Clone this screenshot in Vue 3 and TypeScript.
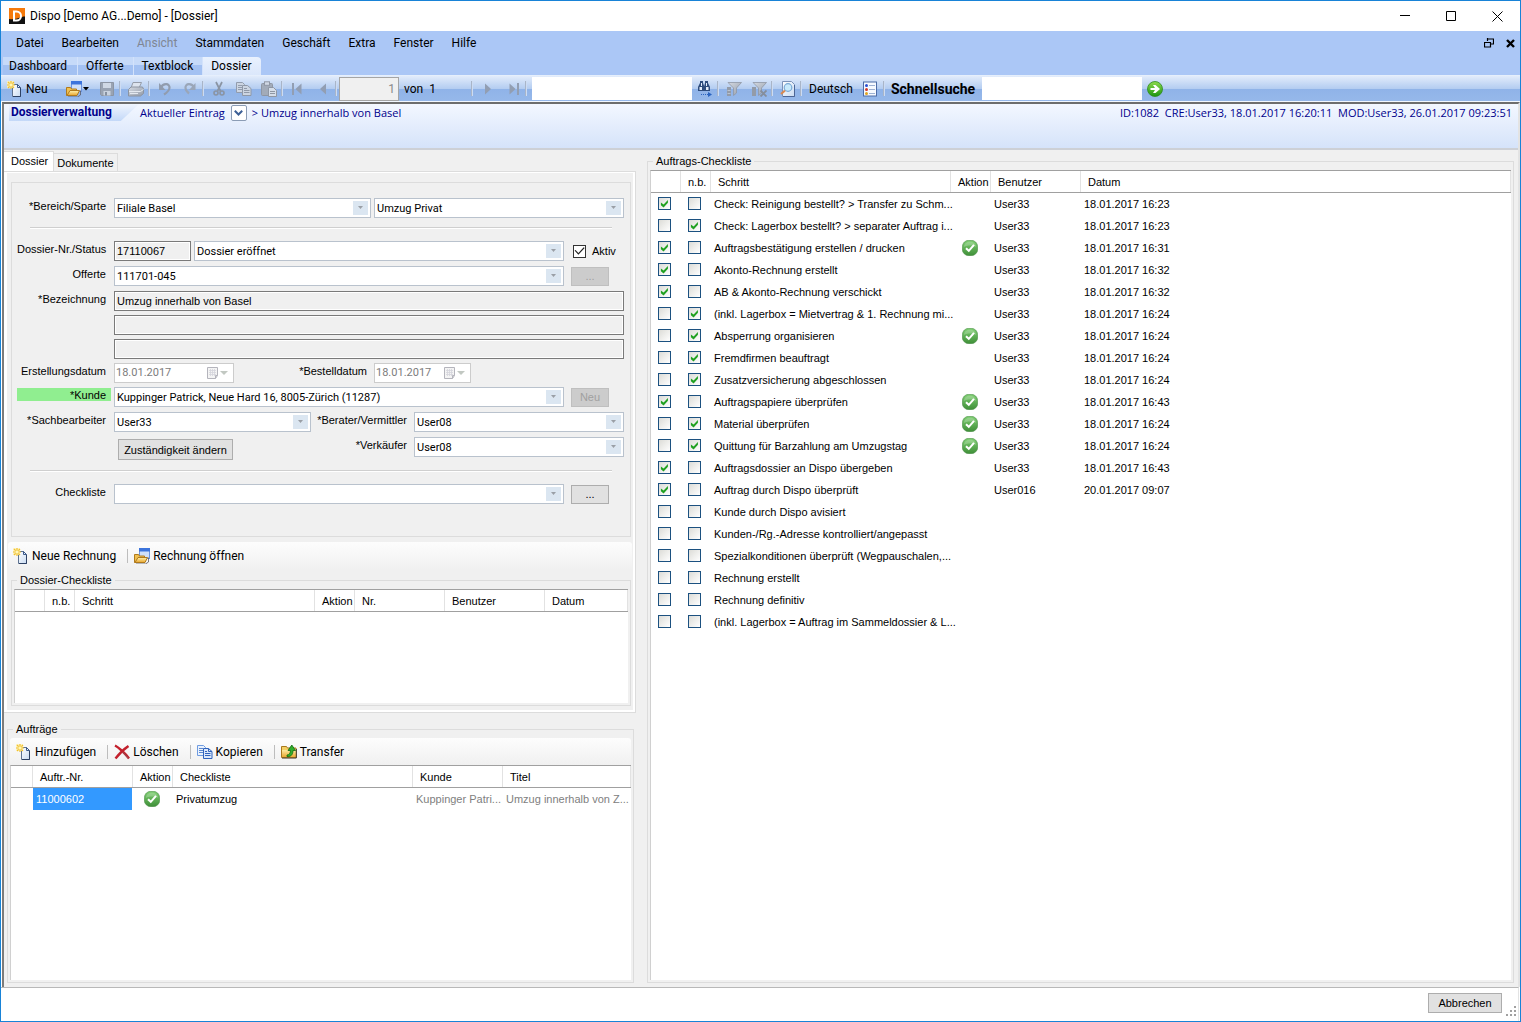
<script setup lang="ts">
import { ref } from 'vue'

interface Step {
  done: boolean
  skipped: boolean
  text: string
  action?: boolean
  user?: string
  date?: string
}

const menus = ['Datei', 'Bearbeiten', 'Ansicht', 'Stammdaten', 'Geschäft', 'Extra', 'Fenster', 'Hilfe']
const windows = ['Dashboard', 'Offerte', 'Textblock', 'Dossier']

const step = (mark: string, text: string, user = '', date = '', action = false): Step => ({
  done: mark === 'x',
  skipped: mark === 'n',
  text,
  user,
  date,
  action,
})

const steps = ref<Step[]>([
  step('x', 'Check: Reinigung bestellt? > Transfer zu Schm...', 'User33', '18.01.2017 16:23'),
  step('n', 'Check: Lagerbox bestellt? > separater Auftrag i...', 'User33', '18.01.2017 16:23'),
  step('x', 'Auftragsbestätigung erstellen / drucken', 'User33', '18.01.2017 16:31', true),
  step('x', 'Akonto-Rechnung erstellt', 'User33', '18.01.2017 16:32'),
  step('x', 'AB & Akonto-Rechnung verschickt', 'User33', '18.01.2017 16:32'),
  step('n', '(inkl. Lagerbox = Mietvertrag & 1. Rechnung mi...', 'User33', '18.01.2017 16:24'),
  step('n', 'Absperrung organisieren', 'User33', '18.01.2017 16:24', true),
  step('n', 'Fremdfirmen beauftragt', 'User33', '18.01.2017 16:24'),
  step('n', 'Zusatzversicherung abgeschlossen', 'User33', '18.01.2017 16:24'),
  step('x', 'Auftragspapiere überprüfen', 'User33', '18.01.2017 16:43', true),
  step('n', 'Material überprüfen', 'User33', '18.01.2017 16:24', true),
  step('n', 'Quittung für Barzahlung am Umzugstag', 'User33', '18.01.2017 16:24', true),
  step('x', 'Auftragsdossier an Dispo übergeben', 'User33', '18.01.2017 16:43'),
  step('x', 'Auftrag durch Dispo überprüft', 'User016', '20.01.2017 09:07'),
  step('', 'Kunde durch Dispo avisiert'),
  step('', 'Kunden-/Rg.-Adresse kontrolliert/angepasst'),
  step('', 'Spezialkonditionen überprüft (Wegpauschalen,...'),
  step('', 'Rechnung erstellt'),
  step('', 'Rechnung definitiv'),
  step('', '(inkl. Lagerbox = Auftrag im Sammeldossier & L...'),
])
const active = ref(true)
</script>

<template>
  <div class="window">
    <svg class="sprite" width="0" height="0" aria-hidden="true">
      <defs>
        <linearGradient id="gSheet" x1="0" y1="0" x2="1" y2="1"><stop offset="0" stop-color="#fff" /><stop offset="1" stop-color="#c9dbf2" /></linearGradient>
        <linearGradient id="gFolder" x1="0" y1="0" x2="0" y2="1"><stop offset="0" stop-color="#fff3b0" /><stop offset="1" stop-color="#e9a52c" /></linearGradient>
        <linearGradient id="gOk" x1="0" y1="0" x2="0" y2="1"><stop offset="0" stop-color="#7fcf72" /><stop offset="1" stop-color="#3f8f38" /></linearGradient>
        <linearGradient id="gGo" x1="0" y1="0" x2="0" y2="1"><stop offset="0" stop-color="#8fdc4e" /><stop offset="1" stop-color="#1c9410" /></linearGradient>
        <linearGradient id="gGray" x1="0" y1="0" x2="1" y2="1"><stop offset="0" stop-color="#d5dae2" /><stop offset="1" stop-color="#939ba8" /></linearGradient>
      </defs>
      <symbol id="i-new" viewBox="0 0 16 16">
        <path d="M5.500 3.500h5l3 3v9h-8z" fill="url(#gSheet)" stroke="#5f7391" />
        <path d="M10.500 3.500v3h3z" fill="#e9f1fb" stroke="#3c5a8a" />
        <path d="M13.500 7v8.500H6" fill="none" stroke="#2d4164" />
        <path d="M0 0h7v7H0z" fill="#fff3b8" opacity=".8" />
        <path d="M1 1l6 6M7 1L1 7M4 0v8M0 4h8" stroke="#f0c030" stroke-width="1.200" />
        <rect x="2.500" y="2.500" width="3" height="3" fill="#fff6b8" />
      </symbol>
      <symbol id="i-open" viewBox="0 0 16 16">
        <rect x="5.500" y=".5" width="10" height="10" fill="#cfe0fa" stroke="#6c94dc" />
        <path d="M5 0h11v3.500H5z" fill="#3c74dc" />
        <path d="M.5 6.500h4l1 1.500h5v6.500H.5z" fill="#f0c050" stroke="#b07a1c" />
        <path d="M1 14.500l3-5h9.500l-2.500 5z" fill="url(#gFolder)" stroke="#b07a1c" />
        <path d="M14.500 9.500v4.500l-3 2H2" fill="none" stroke="#5a5a66" stroke-width=".8" />
      </symbol>
      <symbol id="i-copy" viewBox="0 0 16 16">
        <path d="M.5 1.500h6l2 2v8h-8z" fill="#eaf2fd" stroke="#6f9be0" />
        <path d="M2 4.500h4M2 6.500h4M2 8.500h4" stroke="#5b88d0" />
        <path d="M6.500 4.500h5l3.500 3v7H6.500z" fill="#dbe8fb" stroke="#2f62bd" />
        <path d="M11.500 4.500v3H15M8 9.500h5.500M8 11.500h5.500M8 7.500h2" fill="none" stroke="#2f62bd" />
      </symbol>
      <symbol id="i-ok" viewBox="0 0 16 16">
        <rect x=".3" y=".3" width="15.400" height="15.400" rx="6.500" fill="url(#gOk)" stroke="#4d8f49" stroke-width=".6" />
        <path d="M2 7c0-7 12-7 12 0-3-2-9-2-12 0z" fill="#fff" opacity=".22" />
        <path d="M4 8.200l2.800 2.600L12 4.800" fill="none" stroke="#fff" stroke-width="2" />
      </symbol>
      <symbol id="i-cal" viewBox="0 0 12 12">
        <path d="M.5.5h10v8l-2 3h-8z" fill="#f4f4f4" stroke="#b4b4bc" />
        <path d="M2 3.500h7M2 5.500h7M2 7.500h7M3.500 2v7M5.500 2v7M7.500 2v7" stroke="#d4d4dc" stroke-width=".8" />
        <path d="M8.500 11.500v-3h2" fill="none" stroke="#b4b4bc" />
      </symbol>
    </svg>

    <header class="titlebar">
      <svg class="logo" width="16" height="16" viewBox="0 0 16 16" aria-hidden="true">
        <rect width="16" height="16" fill="#111" />
        <path d="M0 0h16v8.500C11 8.500 9 12 0 11z" fill="#f57a0c" />
        <path d="M5 3.500h2.500a4.200 4.200 0 0 1 0 9H5z" fill="none" stroke="#fff" stroke-width="2" />
      </svg>
      <span class="caption">Dispo [Demo AG...Demo] - [Dossier]</span>
      <div class="winbtns">
        <button type="button" aria-label="Minimieren"><svg width="11" height="11"><path d="M0 4.500h10" stroke="#000" /></svg></button>
        <button type="button" aria-label="Maximieren"><svg width="11" height="11"><path d="M.5.5h9v9h-9z" stroke="#000" fill="none" /></svg></button>
        <button type="button" aria-label="Schliessen"><svg width="11" height="11"><path d="M.5.5l10 10M10.500.5l-10 10" stroke="#000" /></svg></button>
      </div>
    </header>

    <nav class="menubar">
      <button v-for="m in menus" :key="m" type="button" :disabled="m === 'Ansicht'">{{ m }}</button>
      <div class="mdibtns">
        <button type="button" aria-label="Wiederherstellen"><svg width="10" height="10"><path d="M3 1h6.500v5H7M3.500 0v3M.5 4v5h6V4M0 4.500h7" fill="none" stroke="#000" stroke-width="1.200" /></svg></button>
        <button type="button" aria-label="Dossier schliessen"><svg width="9" height="9"><path d="M1 1l7 7M8 1l-7 7" stroke="#000" stroke-width="2.400" /></svg></button>
      </div>
    </nav>

    <div class="wintabs">
      <button v-for="w in windows" :key="w" type="button" :class="{ on: w === 'Dossier' }">{{ w }}</button>
    </div>

    <div class="toolbar">
      <button type="button" class="new"><svg width="16" height="16"><use href="#i-new" /></svg>Neu</button>
      <button type="button" class="open" aria-label="Öffnen">
        <svg width="16" height="16"><use href="#i-open" /></svg>
        <svg width="7" height="4"><path d="M0 0h6L3 3.500z" fill="#000" /></svg>
      </button>
      <button type="button" class="tb" aria-label="Speichern"><svg width="16" height="16"><path d="M1.500 1.500h13v13h-12l-1-1z" fill="#99a3b3" stroke="#8c95a4" /><path d="M4 2h8v5H4z" fill="#cfd8e5" /><path d="M4.500 10h7v4.500h-7z" fill="#c9d2df" /><path d="M6 11h2v3.500H6z" fill="#858f9f" /></svg></button>
      <i class="sep"></i>
      <button type="button" class="tb" aria-label="Drucken"><svg width="16" height="16"><path d="M5 1.500h8.500L11 7H3z" fill="#dde4ee" stroke="#959ca8" /><path d="M.5 8.500L3 6h11.500l1 2v4.500l-3 2.500H.5z" fill="url(#gGray)" stroke="#8c94a1" /><path d="M1 10.500h11.500l3-2M2 12.500h8" fill="none" stroke="#e4e9f0" /></svg></button>
      <i class="sep"></i>
      <button type="button" class="tb" aria-label="Rückgängig"><svg width="16" height="16"><path d="M4 6.500C6 2 13 2 12.500 7c-.3 3-2.500 4.500-5.500 6.500" fill="none" stroke="#919cae" stroke-width="2.200" /><path d="M2 2v7h6.500z" fill="#919cae" /></svg></button>
      <button type="button" class="tb" aria-label="Wiederholen"><svg width="16" height="16"><path d="M12 6.500C10 2 3 2 3.500 7c.2 2.500 1.500 4 3.500 5.500" fill="none" stroke="#9aa6b8" stroke-width="2.200" /><path d="M13.500 2v7H7z" fill="#9aa6b8" /></svg></button>
      <i class="sep"></i>
      <button type="button" class="tb" aria-label="Ausschneiden"><svg width="16" height="16"><path d="M5 1l4.500 9M11 1L6.500 10" stroke="#8a94a3" stroke-width="1.700" /><circle cx="5" cy="12" r="2" fill="none" stroke="#8a94a3" stroke-width="1.600" /><circle cx="11" cy="12" r="2" fill="none" stroke="#8a94a3" stroke-width="1.600" /></svg></button>
      <button type="button" class="tb" aria-label="Kopieren"><svg width="16" height="16"><path d="M.5 1.500h6l2 2v8h-8z" fill="#ccd5e2" stroke="#929cad" /><path d="M2 4.500h4M2 6.500h4M2 8.500h4" stroke="#929cad" /><path d="M6.500 4.500h5l3.500 3v7H6.500z" fill="#ccd5e2" stroke="#8f98a7" /><path d="M8 9.500h5.500M8 11.500h5.500M8 7.500h3" stroke="#8f98a7" /></svg></button>
      <button type="button" class="tb" aria-label="Einfügen"><svg width="16" height="16"><rect x=".5" y="2.500" width="11" height="12" rx="1" fill="#a2abb9" stroke="#8f97a4" /><rect x="3.500" y=".8" width="5" height="3.500" fill="#d0d8e4" stroke="#8f97a4" /><path d="M7.500 6.500h5l3 3v6h-8z" fill="#d5deea" stroke="#8f97a4" /><path d="M9 10.500h5M9 12.500h5" stroke="#8f97a4" /></svg></button>
      <i class="sep"></i>
      <button type="button" class="tb" aria-label="Erster"><svg width="16" height="16"><path d="M2 2h2v12H2zM11.500 2.500v11l-6-5.500z" fill="#929eb2" /></svg></button>
      <button type="button" class="tb" aria-label="Vorheriger"><svg width="16" height="16"><path d="M11 2.500v11L5 8z" fill="#929eb2" /></svg></button>
      <i class="sep"></i>
      <input class="pos" type="text" value="1" disabled aria-label="Position" />
      <span class="count">von&nbsp; 1</span>
      <i class="sep"></i>
      <button type="button" class="tb" aria-label="Nächster"><svg width="16" height="16"><path d="M5 2.500v11L11 8z" fill="#929eb2" /></svg></button>
      <button type="button" class="tb" aria-label="Letzter"><svg width="16" height="16"><path d="M12 2h2v12h-2zM4.500 2.500v11l6-5.500z" fill="#929eb2" /></svg></button>
      <i class="sep"></i>
      <input class="find" type="text" aria-label="Suchen" />
      <button type="button" class="tb" aria-label="Weitersuchen"><svg width="16" height="16"><path d="M3 0h3v2l1.500 4v4H1V6l2-4zM8 0h3v2l2 4v4H7V6l1-4z" fill="#2f4d7d" /><path d="M2.500 6h2.500v3H2.500zM9 6h2.500v3H9zM4 2h1v3H4zM9 2h1v3H9z" fill="#e4edfa" /><path d="M4 13.500h7" stroke="#2b64c0" stroke-dasharray="1 1" /><path d="M11 11v5l4-2.500z" fill="#2b64c0" /></svg></button>
      <i class="sep"></i>
      <button type="button" class="tb" aria-label="Filter"><svg width="16" height="16"><path d="M2 1.500h13.500l-5 5.500v5l-3 2.500V7z" fill="url(#gGray)" stroke="#8f97a4" stroke-width=".8" /><path d="M1 6h4v9H1z" fill="#939ba8" /><path d="M1.500 9.500h3M1.500 12.500h3" stroke="#b9c3d1" /></svg></button>
      <button type="button" class="tb" aria-label="Filter entfernen"><svg width="16" height="16"><path d="M2 1.500h13.500l-5 5.500v5l-3 2.500V7z" fill="url(#gGray)" stroke="#8f97a4" stroke-width=".8" /><path d="M1 6h4v9H1z" fill="#939ba8" /><path d="M9.500 9.500l6 6M15.500 9.500l-6 6" stroke="#858e9c" stroke-width="1.800" /></svg></button>
      <i class="sep"></i>
      <button type="button" class="tb" aria-label="Vorschau"><svg width="16" height="16"><path d="M2.500.5h9l3 3v12h-12z" fill="url(#gSheet)" stroke="#7d93b8" /><path d="M14.500 4v11.500H3" fill="none" stroke="#4c6596" /><circle cx="8" cy="6.500" r="3.800" fill="#c8eafb" stroke="#7aa9d6" stroke-width="1.200" /><path d="M5 9.500l-4 3.500" stroke="#d98a52" stroke-width="2.200" /></svg></button>
      <i class="sep"></i>
      <button type="button" class="lang">Deutsch</button>
      <button type="button" class="tb" aria-label="Liste"><svg width="16" height="16"><rect x="1.500" y="1" width="13" height="14" fill="#f7faff" stroke="#4d6ca6" /><path d="M7 4.500h6M7 8.500h6M7 12.500h6" stroke="#9db1d3" /><circle cx="4.500" cy="4.500" r="1.500" fill="#2b4fd0" /><circle cx="4.500" cy="8.500" r="1.500" fill="#d3382a" /><circle cx="4.500" cy="12.500" r="1.500" fill="#e0a520" /></svg></button>
      <i class="sep"></i>
      <label class="quick" for="quick">Schnellsuche</label>
      <input id="quick" class="find" type="text" />
      <button type="button" class="tb" aria-label="Los"><svg width="16" height="16"><circle cx="8" cy="8" r="7.500" fill="url(#gGo)" stroke="#2f8c1e" stroke-width=".8" /><path d="M3.500 7H8L6 4h2.500L13 8l-4.500 4H6l2-3H3.500z" fill="#fff" /></svg></button>
    </div>

    <div class="client">
      <div class="infobar">
        <h1>Dossierverwaltung</h1>
        <span>Aktueller Eintrag</span>
        <button type="button" class="drop" aria-label="Einträge"><svg width="9" height="6"><path d="M.8.8L4.500 4.500 8.200.8" fill="none" stroke="#3c5f96" stroke-width="2" /></svg></button>
        <span>&gt; Umzug innerhalb von Basel</span>
        <span class="meta">ID:1082&nbsp; CRE:User33, 18.01.2017 16:20:11&nbsp; MOD:User33, 26.01.2017 09:23:51</span>
      </div>

      <main class="work">
        <section class="left">
          <div class="tabs">
            <button type="button" class="on">Dossier</button>
            <button type="button">Dokumente</button>
          </div>
          <div class="page">
            <form class="form" @submit.prevent>
              <div class="row">
                <label for="bereich">*Bereich/Sparte</label>
                <span class="combo grow"><select id="bereich"><option>Filiale Basel</option></select><svg width="15" height="14"><path d="M5 5h5L7.500 8z" /></svg></span>
                <span class="combo sparte"><select aria-label="Sparte"><option>Umzug Privat</option></select><svg width="15" height="14"><path d="M5 5h5L7.500 8z" /></svg></span>
              </div>
              <hr />
              <div class="row">
                <label for="nr">Dossier-Nr./Status</label>
                <input id="nr" class="ro nr" type="text" value="17110067" readonly />
                <span class="combo grow"><select aria-label="Status"><option>Dossier eröffnet</option></select><svg width="15" height="14"><path d="M5 5h5L7.500 8z" /></svg></span>
                <span class="side"><input id="aktiv" v-model="active" type="checkbox" class="chk plain" /><label for="aktiv" class="inline">Aktiv</label></span>
              </div>
              <div class="row">
                <label for="offerte">Offerte</label>
                <span class="combo grow"><select id="offerte"><option>111701-045</option></select><svg width="15" height="14"><path d="M5 5h5L7.500 8z" /></svg></span>
                <span class="side"><button type="button" class="btn small" disabled>...</button></span>
              </div>
              <div class="row tight">
                <label for="bez">*Bezeichnung</label>
                <input id="bez" class="ro grow" type="text" value="Umzug innerhalb von Basel" readonly />
              </div>
              <div class="row tight"><span class="nolabel"></span><input class="ro grow" type="text" readonly aria-label="Bezeichnung 2" /></div>
              <div class="row tight"><span class="nolabel"></span><input class="ro grow" type="text" readonly aria-label="Bezeichnung 3" /></div>
              <div class="row tight">
                <label for="erst">Erstellungsdatum</label>
                <span class="date first"><input id="erst" type="text" value="18.01.2017" disabled /><svg width="12" height="12"><use href="#i-cal" /></svg><svg width="8" height="5"><path d="M0 0h8L4 4z" fill="#c2c8c2" /></svg></span>
                <label for="best" class="second">*Bestelldatum</label>
                <span class="date"><input id="best" type="text" value="18.01.2017" disabled /><svg width="12" height="12"><use href="#i-cal" /></svg><svg width="8" height="5"><path d="M0 0h8L4 4z" fill="#c2c8c2" /></svg></span>
                <span class="rest"></span>
              </div>
              <div class="row">
                <label for="kunde" class="mark">*Kunde</label>
                <span class="combo grow"><select id="kunde"><option>Kuppinger Patrick, Neue Hard 16, 8005-Zürich (11287)</option></select><svg width="15" height="14"><path d="M5 5h5L7.500 8z" /></svg></span>
                <span class="side"><button type="button" class="btn small" disabled>Neu</button></span>
              </div>
              <div class="row">
                <label for="sach">*Sachbearbeiter</label>
                <span class="combo sach"><select id="sach"><option>User33</option></select><svg width="15" height="14"><path d="M5 5h5L7.500 8z" /></svg></span>
                <label for="berater" class="second">*Berater/Vermittler</label>
                <span class="combo person"><select id="berater"><option>User08</option></select><svg width="15" height="14"><path d="M5 5h5L7.500 8z" /></svg></span>
              </div>
              <div class="row">
                <span class="nolabel"></span>
                <button type="button" class="btn duty">Zuständigkeit ändern</button>
                <label for="verk" class="second">*Verkäufer</label>
                <span class="combo person"><select id="verk"><option>User08</option></select><svg width="15" height="14"><path d="M5 5h5L7.500 8z" /></svg></span>
              </div>
              <hr class="low" />
              <div class="row">
                <label for="check">Checkliste</label>
                <span class="combo grow"><select id="check"><option></option></select><svg width="15" height="14"><path d="M5 5h5L7.500 8z" /></svg></span>
                <span class="side"><button type="button" class="btn small">...</button></span>
              </div>
            </form>

            <div class="strip">
              <button type="button"><svg width="16" height="16"><use href="#i-new" /></svg>Neue Rechnung</button>
              <i></i>
              <button type="button"><svg width="16" height="16"><use href="#i-open" /></svg>Rechnung öffnen</button>
            </div>

            <fieldset class="group dcl">
              <legend>Dossier-Checkliste</legend>
              <div class="grid">
                <table>
                  <colgroup><col class="c30" /><col class="c30" /><col class="c240" /><col class="c40" /><col class="c90" /><col class="c100" /><col /></colgroup>
                  <thead><tr><th></th><th>n.b.</th><th>Schritt</th><th>Aktion</th><th>Nr.</th><th>Benutzer</th><th>Datum</th></tr></thead>
                </table>
              </div>
            </fieldset>
          </div>

          <fieldset class="group orders">
            <legend>Aufträge</legend>
            <div class="strip">
              <button type="button"><svg width="16" height="16"><use href="#i-new" /></svg>Hinzufügen</button>
              <i></i>
              <button type="button"><svg width="16" height="16"><path d="M1 1.500C4 3 11 9 15 14.500M14.500 2C10 5 5 10 1.500 14.500" fill="none" stroke="#c3202c" stroke-width="2.400" /><path d="M8.500 8c2 2 4 4 6 6.500" stroke="#9c5a60" /></svg>Löschen</button>
              <i></i>
              <button type="button"><svg width="16" height="16"><use href="#i-copy" /></svg>Kopieren</button>
              <i></i>
              <button type="button"><svg width="16" height="16"><path d="M.5 2.500h5l1 1.500h8.500v9.500H.5z" fill="#f3cf63" stroke="#a87820" /><path d="M1 6h10l4-1v8.500H1z" fill="url(#gFolder)" /><path d="M15.300 5v9H1" fill="none" stroke="#3a3322" /><path d="M6 12.500c3 .5 6-1 6-6h2.500L10.800 1 7 6.500h2.500c0 2.500-1.500 4.500-3.500 4.500z" fill="#2fae2c" stroke="#12680f" stroke-width=".8" /></svg>Transfer</button>
            </div>
            <div class="grid">
              <table>
                <colgroup><col class="c22" /><col class="c100" /><col class="c40" /><col class="c240" /><col class="c90" /><col /></colgroup>
                <thead><tr><th></th><th>Auftr.-Nr.</th><th>Aktion</th><th>Checkliste</th><th>Kunde</th><th>Titel</th></tr></thead>
                <tbody>
                  <tr>
                    <td></td>
                    <td class="sel"><span>11000602</span></td>
                    <td class="act"><svg width="16" height="16"><use href="#i-ok" /></svg></td>
                    <td>Privatumzug</td>
                    <td class="dim">Kuppinger Patri...</td>
                    <td class="dim">Umzug innerhalb von Z...</td>
                  </tr>
                </tbody>
              </table>
            </div>
          </fieldset>
        </section>

        <fieldset class="group right">
          <legend>Auftrags-Checkliste</legend>
          <div class="grid">
            <table>
              <colgroup><col class="c30" /><col class="c30" /><col class="c240" /><col class="c40" /><col class="c90" /><col /></colgroup>
              <thead><tr><th></th><th>n.b.</th><th>Schritt</th><th>Aktion</th><th>Benutzer</th><th>Datum</th></tr></thead>
              <tbody>
                <tr v-for="s in steps" :key="s.text">
                  <td class="tick"><input v-model="s.done" type="checkbox" class="chk" :aria-label="s.text + ' erledigt'" /></td>
                  <td class="tick"><input v-model="s.skipped" type="checkbox" class="chk" :aria-label="s.text + ' n.b.'" /></td>
                  <td>{{ s.text }}</td>
                  <td class="act"><svg v-if="s.action" width="16" height="16"><use href="#i-ok" /></svg></td>
                  <td>{{ s.user }}</td>
                  <td>{{ s.date }}</td>
                </tr>
              </tbody>
            </table>
          </div>
        </fieldset>
      </main>
    </div>

    <footer class="foot">
      <button type="button" class="btn cancel">Abbrechen</button>
      <svg class="grip" width="11" height="11"><path d="M8 0h2v2H8zM4 4h2v2H4zM8 4h2v2H8zM0 8h2v2H0zM4 8h2v2H4zM8 8h2v2H8z" fill="#a0a0a0" /></svg>
    </footer>
  </div>
</template>

<style>
body { margin: 0; }
</style>

<style scoped>
* { box-sizing: border-box; }
.window {
  --ui: Roboto, "Open Sans", sans-serif;
  --form: "Liberation Sans", Arial, sans-serif;
  display: flex;
  flex-direction: column;
  min-height: 100vh;
  border: 1px solid #1883d7;
  background: #fff;
  color: #000;
  font: 12px/16px var(--ui);
}
.sprite { position: absolute; }
button, input, select { margin: 0; padding: 0; border: 0; border-radius: 0; background: none; color: inherit; font: inherit; }
svg { display: block; flex: none; }

.titlebar { display: flex; align-items: center; height: 30px; padding-left: 8px; }
.caption { margin-left: 5px; }
.winbtns { display: flex; margin-left: auto; }
.winbtns button { display: flex; align-items: center; justify-content: center; width: 46px; height: 28px; }

.menubar { display: flex; align-items: center; gap: 18px; height: 26px; padding: 0 0 2px 15px; background: #abc7f6; }
.menubar button:disabled { color: #7f8693; }
.mdibtns { display: flex; align-items: center; gap: 12px; margin-left: auto; padding-right: 5px; }

.wintabs { display: flex; height: 18px; padding-left: 2px; background: #abc7f6; }
.wintabs button { padding: 0 9px 0 8px; border-right: 1px solid #d3e2fb; background: linear-gradient(#c6daf9 0 45%, #a3c1f2 45% 100%); line-height: 18px; }
.wintabs button:first-child { padding: 0 10px 0 6px; }
.wintabs button.on { border-right: 0; border-top-right-radius: 4px; background: linear-gradient(#e9f1fe, #dbe7fb); }

.toolbar { display: flex; align-items: center; height: 27px; padding-left: 4px; border-top: 1px solid #e6effc; border-bottom: 1px solid #f2f7fe; background: linear-gradient(#e2ecfb 0, #b4cdf1 50%, #8fb3e8 50%, #96b8ea 100%); }
.toolbar button { display: flex; align-items: center; flex: none; height: 22px; }
.toolbar .new { width: 59px; padding-left: 2px; gap: 3px; }
.toolbar .open { width: 30px; padding-left: 2px; gap: 1px; }
.toolbar .tb { justify-content: center; width: 25px; }
.toolbar .lang { padding: 0 5px; }
.toolbar .quick { padding: 0 7px 0 4px; font: bold 14px/16px var(--ui); }
.sep { flex: none; width: 4px; height: 15px; border-left: 1px solid #a9b5c8; box-shadow: inset 1px 0 #cddcf3; }
.pos { flex: none; width: 60px; height: 24px; padding: 0 3px; border: 1px solid #a5a5a5; background: #f0f0f0; color: #8a8a8a; text-align: right; }
.count { flex: none; width: 72px; padding-left: 5px; }
.find { flex: 0 1 160px; min-width: 60px; height: 23px; padding: 0 3px; background: #fff; }
.sep + .find { margin-left: 3px; }

.client { display: flex; flex: 1; flex-direction: column; border-top: 2px solid #6d6d6d; border-left: 2px solid #7c7c7c; border-right: 2px solid #e3e3e3; background: #f0f0f0; margin-left: 1px; }
.infobar { display: flex; align-items: flex-start; height: 46px; padding: 0 6px 0 5px; border-bottom: 2px solid #cdd0d6; background: linear-gradient(#f3f7ff, #d5e3fa); color: #00008b; font: 11px/17px "Open Sans", sans-serif; }
.infobar h1 { flex: none; width: 130px; margin: 0; padding-left: 2px; background: linear-gradient(#f0f5fe, #c3d8f8); clip-path: polygon(0 0, 100% 0, 86% 100%, 0 100%); font: bold 12px/17px var(--ui); }
.infobar span { padding-left: 1px; white-space: nowrap; }
.infobar .drop { display: flex; align-items: center; justify-content: center; flex: none; width: 16px; height: 16px; margin: 1px 4px 0 6px; border: 1px solid #8b9cb5; border-radius: 2px; background: #fff; }
.infobar .meta { margin-left: auto; }

.work { display: grid; grid-template-columns: 632fr 867fr; column-gap: 11px; flex: 1; padding: 1px 4px 4px 0; font: 11px/14px var(--form); }
.left { display: flex; flex-direction: column; min-width: 0; }

.tabs { display: flex; align-items: flex-end; height: 20px; }
.tabs button { height: 18px; padding: 0 3px; border: 1px solid #dcdcdc; border-bottom: 0; border-left: 0; background: #f0f0f0; }
.tabs button.on { height: 20px; padding: 0 5px 2px 7px; background: #fff; }
.page { padding: 10px 3px 6px 4px; border: 1px solid #dcdcdc; border-left: 0; box-shadow: inset 3px 1px #fff, inset -2px -2px #fff; }

.form { margin: 0 1px 5px 3px; padding: 15px 6px 32px 5px; border: 1px solid #dcdcdc; }
.row { display: flex; height: 20px; margin-bottom: 5px; }
.row.tight { margin-bottom: 4px; }
.row:last-child { margin-bottom: 0; }
.row > label { flex: none; width: 94px; height: 13px; margin: 1px 3px 0 0; padding: 1px 5px 0 0; line-height: 13px; text-align: right; white-space: nowrap; }
.row > label.second { flex: 1; margin-right: 2px; }
.row > label.mark { background: #90ee90; }
.nolabel { flex: none; width: 97px; }
.rest { flex: none; width: 153px; }
.form hr { height: 2px; margin: 9px 12px 12px 13px; border: 0; border-top: 1px solid #cfcfcf; background: #fff; }
.form hr.low { margin-top: 13px; }
.row:has(+ hr) { margin-bottom: 0; }
.grow { flex: 1; min-width: 0; }
.combo { display: grid; align-items: center; height: 20px; border: 1px solid #b9c2cd; background: #fff; }
.combo select { grid-area: 1 / 1; width: 100%; height: 18px; padding: 1px 0 0 2px; appearance: none; outline: 0; font: 11px/17px var(--ui); }
.combo svg { grid-area: 1 / 1; justify-self: end; margin-right: 2px; background: #dbe6f1; pointer-events: none; }
.combo svg path { fill: #9a9fa6; }
.combo.sparte { flex: 0 1 250px; margin-left: 3px; }
.combo.sach { flex: none; width: 197px; }
.combo.person { flex: none; width: 210px; }
.ro { height: 20px; padding-left: 2px; border: 1px solid #7a7a7a; background: #f0f0f0; box-shadow: inset 0 0 0 1px #fff; }
.ro.nr { flex: none; width: 77px; margin-right: 3px; font-size: 11px; }
.side { display: flex; align-items: center; flex: none; width: 60px; padding-left: 7px; }
.side .chk { margin-left: 2px; }
.side .inline { margin-left: 6px; }
.date { display: flex; align-items: center; flex: none; width: 97px; height: 20px; border: 1px solid #cccccc; background: #fff; }
.date.first { width: 120px; }
.date input { flex: 1; min-width: 0; padding-left: 1px; color: #7c7c7c; font: 11px/18px var(--ui); }
.date svg:last-child { margin: 0 5px 0 1px; }

.btn { height: 20px; border: 1px solid #adadad; background: #e1e1e1; font: 11px/16px var(--form); white-space: nowrap; }
.btn.small { width: 38px; height: 19px; }
.btn:disabled { border-color: #bfbfbf; background: #cccccc; color: #a0a0a0; }
.btn.duty { flex: none; width: 115px; height: 21px; margin: 2px 0 0 4px; }

.strip { display: flex; align-items: center; height: 28px; padding-left: 5px; border-radius: 3px 3px 0 0; background: linear-gradient(#fdfdfd, #f0f0f0); font: 12px/16px var(--ui); }
.strip button { display: flex; align-items: center; gap: 3px; }
.strip i { width: 1px; height: 14px; margin: 0 6px 0 11px; background: #bdbdbd; }

.group { display: flex; flex-direction: column; min-width: 0; margin: 0; padding: 2px; border: 1px solid #dcdcdc; }
.group legend { height: 14px; margin-left: 3px; padding: 0 3px; }
.dcl { height: 133px; margin: 3px 1px 0 3px; }
.orders { flex: 1; margin: 9px 2px 0 3px; }
.orders .strip { height: 27px; padding-left: 6px; }
.right { margin-top: 3px; }
.grid { flex: 1; border-top: 1px solid #a0a0a0; border-left: 1px solid #a0a0a0; background: #fff; overflow: hidden; }
.dcl .grid, .orders .grid, .right .grid { border-left-color: #d0d0d0; }
table { width: 100%; border-spacing: 0; table-layout: fixed; }
th { height: 22px; padding: 1px 0 0 7px; border-bottom: 1px solid #a0a0a0; background: linear-gradient(#e2e2e2, #e2e2e2) right / 1px 100% no-repeat; font-weight: normal; text-align: left; white-space: nowrap; }
td { height: 22px; padding: 0 0 0 3px; white-space: nowrap; }
.c22 { width: 22px; }
.c30 { width: 30px; }
.c40 { width: 40px; }
.c90 { width: 90px; }
.c100 { width: 100px; }
.c240 { width: 240px; }
td.sel { padding: 0 1px 0 0; }
td.sel span { display: block; padding-left: 3px; background: #3399ff; color: #fff; line-height: 22px; }
td.dim { color: #808080; }
td.act { padding-left: 11px; }
td.tick { padding: 0 0 1px 7px; }

.chk { display: block; width: 13px; height: 13px; appearance: none; border: 1px solid #1c5180; background: linear-gradient(135deg, #dcdcd7, #fff); }
.chk:checked::before { content: ""; display: block; width: 9px; height: 9px; margin: 1px; background: #21a121; clip-path: polygon(10% 38%, 40% 62%, 88% 10%, 88% 42%, 40% 94%, 10% 70%); }
.chk.plain { border-color: #333; background: #fff; }
.chk.plain:checked::before { width: 11px; height: 9px; margin: 1px 0; background: #222; clip-path: polygon(5% 45%, 14% 38%, 40% 72%, 88% 8%, 97% 16%, 40% 92%); }

.foot { display: flex; align-items: flex-start; justify-content: flex-end; height: 34px; margin-right: 1px; padding-top: 5px; border-top: 1px solid #b8b8b8; border-right: 1px solid #e3e3e3; background: #fff; }
.btn.cancel { width: 74px; }
.grip { align-self: flex-end; margin: 0 1px 4px 4px; }
</style>
